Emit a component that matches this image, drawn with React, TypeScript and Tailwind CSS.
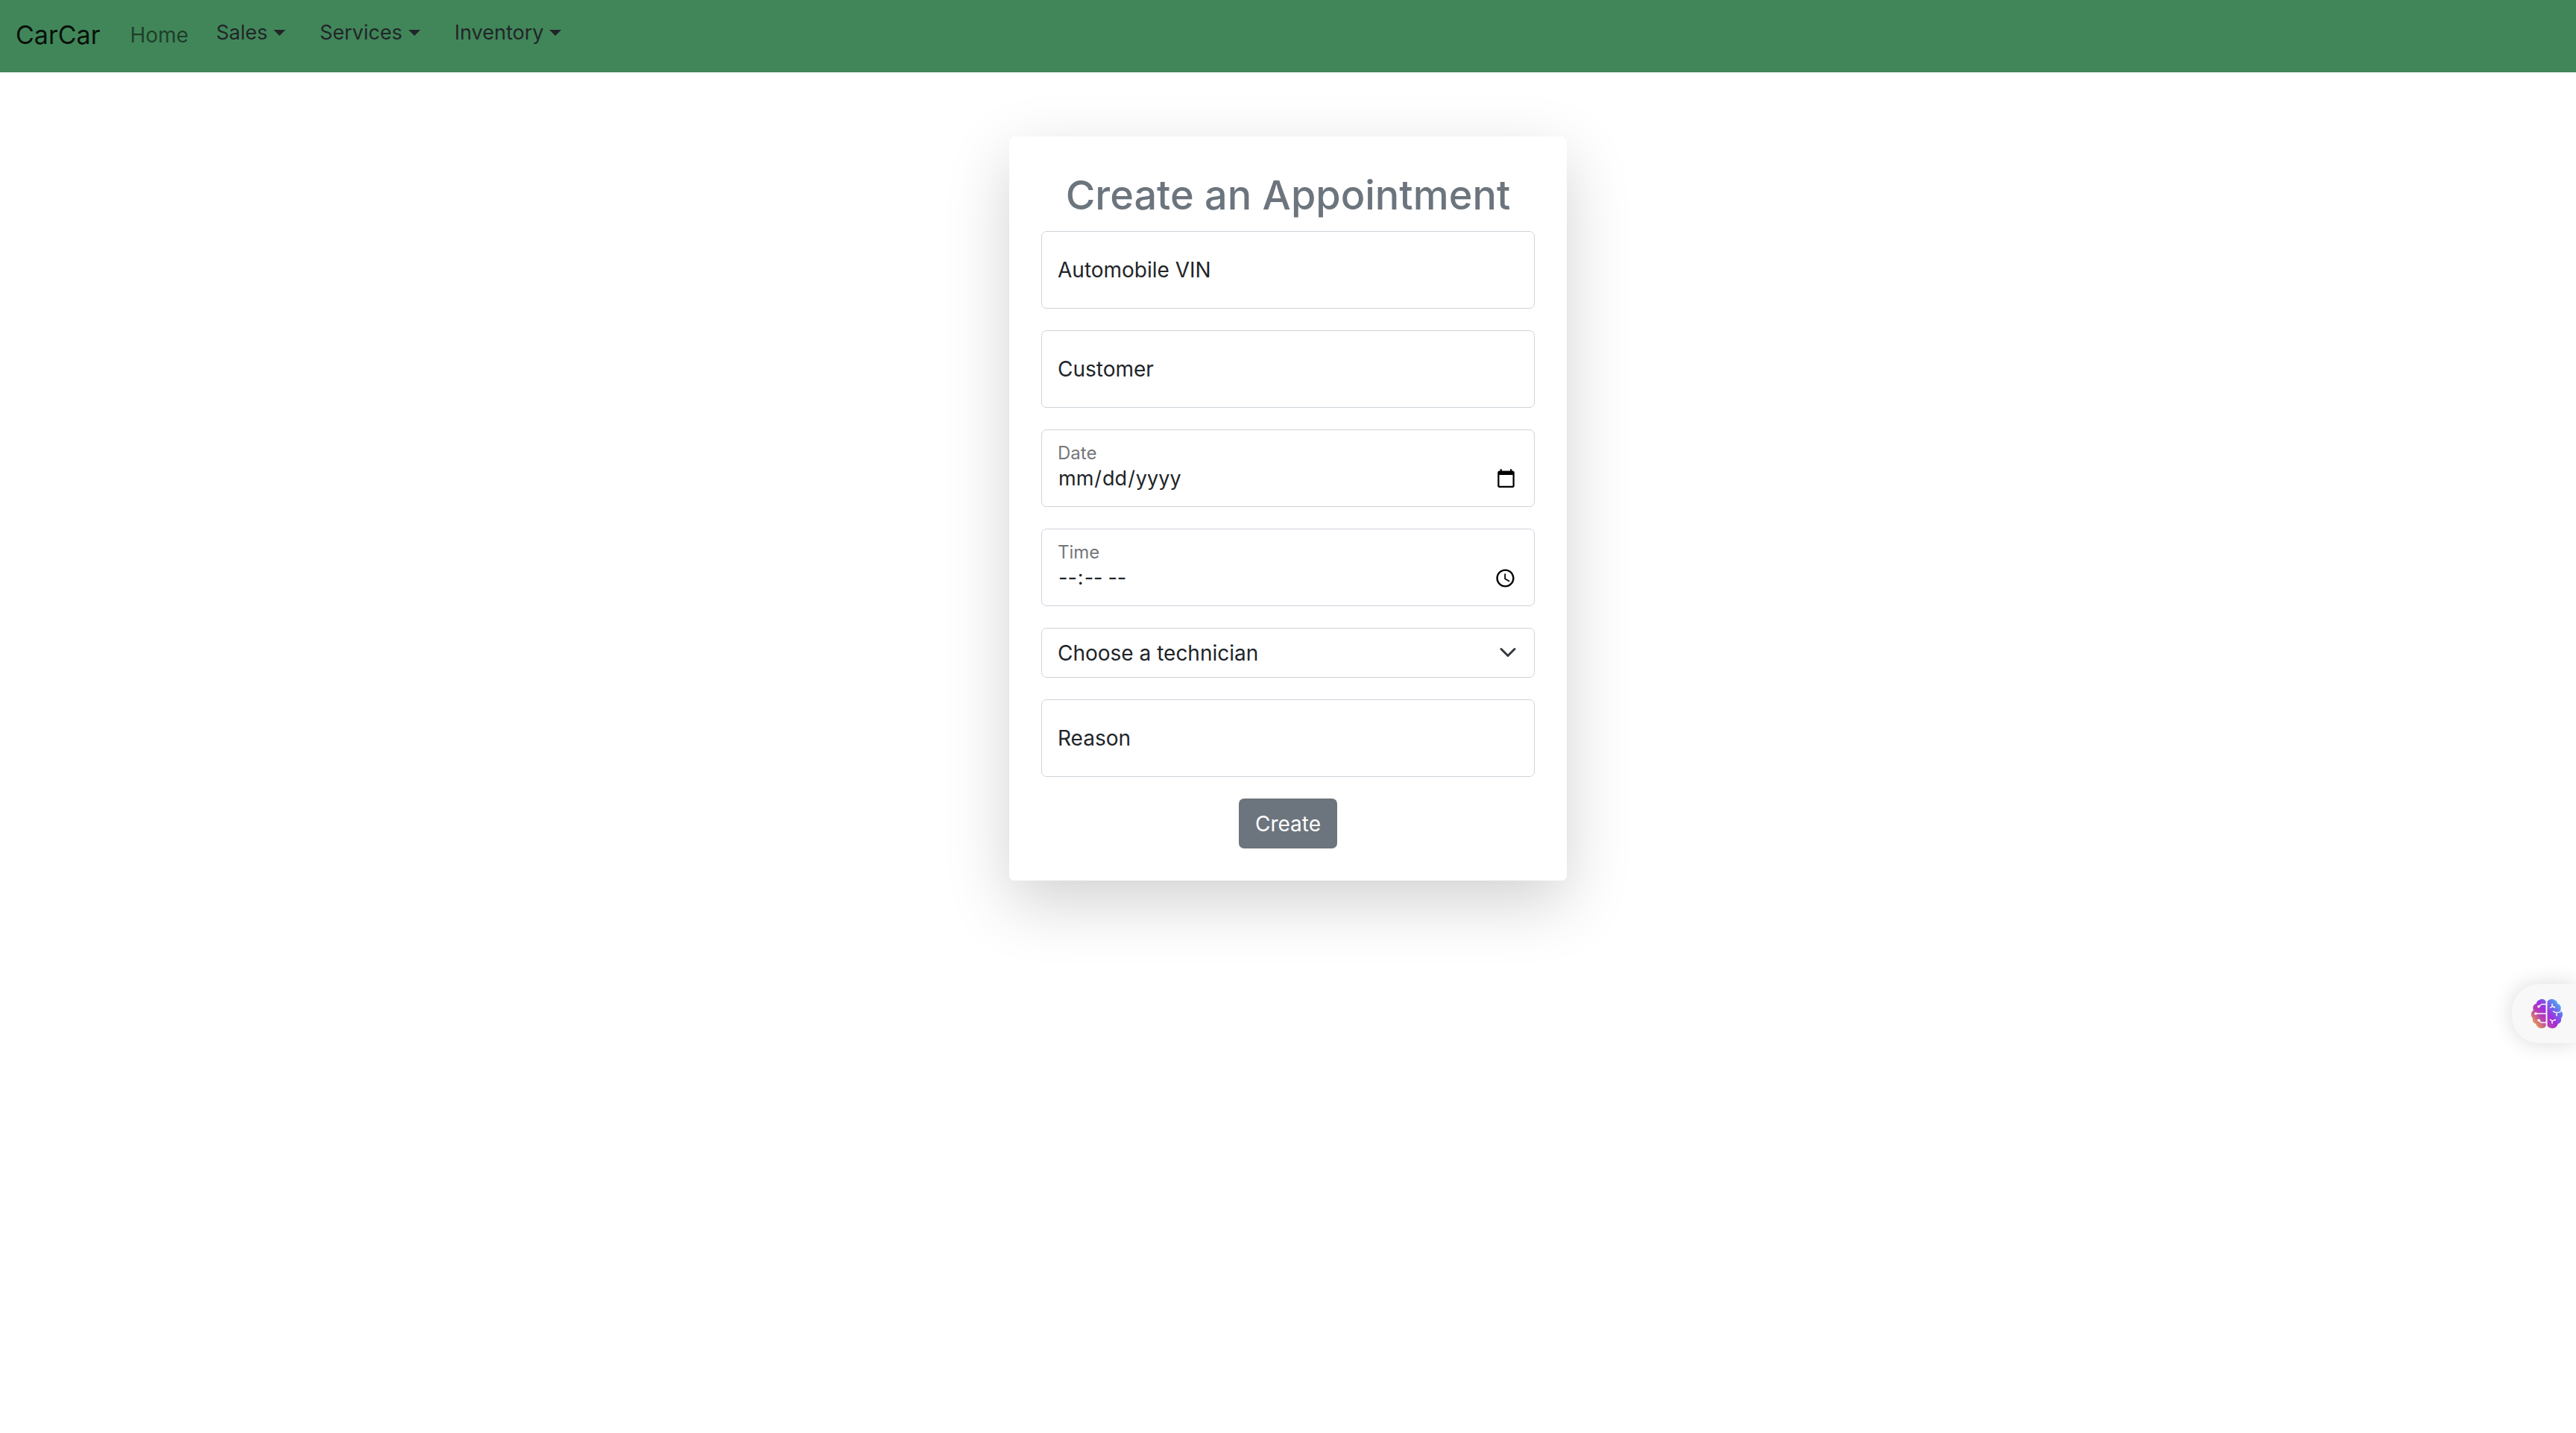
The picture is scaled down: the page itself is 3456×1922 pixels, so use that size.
import React from 'react';

const fieldBox =
  'block w-full rounded-[7px] border border-[#ced4da] bg-white px-[21px] text-[#212529] outline-none';

function TextField({ id, label }: { id: string; label: string }) {
  return (
    <div className="relative">
      <input id={id} name={id} type="text" className={`${fieldBox} h-[104px] text-[28px]`} />
      <label
        htmlFor={id}
        className="pointer-events-none absolute inset-0 flex items-center px-[22px] text-[28px] text-[#212529]"
      >
        {label}
      </label>
    </div>
  );
}

function PickerField({ id, label, type }: { id: string; label: string; type: 'date' | 'time' }) {
  return (
    <div className="relative">
      <input
        id={id}
        name={id}
        type={type}
        className={`${fieldBox} h-[104px] pt-[46px] pb-[17px] text-[27px] [&::-webkit-calendar-picker-indicator]:size-[29px]`}
      />
      <label
        htmlFor={id}
        className="pointer-events-none absolute top-4 left-[22px] text-[24px] leading-8 text-[#212529]/65"
      >
        {label}
      </label>
    </div>
  );
}

function NavMenu({ label }: { label: string }) {
  return (
    <button type="button" className="flex items-center gap-2 text-[27px] leading-[44px] text-[#212529]">
      {label}
      <svg width="16" height="8" viewBox="0 0 16 8" aria-hidden="true">
        <path d="M0 0h16L8 8z" fill="currentColor" />
      </svg>
    </button>
  );
}

function BrainIcon() {
  return (
    <svg width="44" height="42" viewBox="0 0 44 42" aria-hidden="true">
      <defs>
        <linearGradient id="brainFill" gradientUnits="userSpaceOnUse" x1="5" y1="34" x2="38" y2="6">
          <stop offset="0" stopColor="#e59a4e" />
          <stop offset="0.3" stopColor="#b93cb4" />
          <stop offset="0.52" stopColor="#a030dc" />
          <stop offset="0.75" stopColor="#7262ec" />
          <stop offset="1" stopColor="#52acf2" />
        </linearGradient>
      </defs>
      <g fill="url(#brainFill)">
        <path d="M20.500 4C19 1 15 0 12 2C9 3 8 5 8 7C4 8 2 12 4 16C0 18 0 24 3 27C2 31 5 34 7 34C9 39 12 41 16 40C18 40 20 39 20.500 37Z" />
        <path d="M22.500 4C25 1 29 0 32 2C35 3 36 5 36 7C40 8 42 12 40 16C44 18 44 24 41 27C42 31 39 34 37 34C35 39 32 41 28 40C26 40 24 39 22.500 37Z" />
      </g>
      <g fill="none" stroke="#f8f8f8" strokeWidth="1.500">
        <path d="M21 8h-6l-4 3M21 20.500H7M21 32.500h-7l-3-3" />
        <path d="M29 7v4l-3 2M29 10.500l4 2M30 17c3 3 8 3 13-1M35 19v5M26 28l3 2.500 5-2M29 30v4" />
      </g>
      <g fill="#f8f8f8">
        <circle cx="11" cy="11" r="1.800" />
        <circle cx="7" cy="20.500" r="1.800" />
        <circle cx="11" cy="29.500" r="1.800" />
      </g>
    </svg>
  );
}

export default function App() {
  return (
    <div className="min-h-screen bg-white font-['Inter',sans-serif] text-[#212529]">
      <nav className="flex h-[97px] items-start bg-[#418659] px-[21px] pt-[22px]">
        <a href="#" className="text-[34px] leading-[50px] text-black/90">
          CarCar
        </a>
        <a href="#" className="ml-10 pt-1 text-[28px] leading-[43px] text-black/55">
          Home
        </a>
        <div className="ml-[37px] flex gap-[46px]">
          <NavMenu label="Sales" />
          <NavMenu label="Services" />
          <NavMenu label="Inventory" />
        </div>
      </nav>

      <main className="flex justify-center pt-[86px]">
        <form className="flex w-[748px] flex-col gap-[29px] rounded-[7px] bg-white p-[43px] shadow-[0_29px_86px_rgba(0,0,0,0.18)]">
          <h1 className="-mb-[17px] text-center text-[54px] leading-[72px] font-medium text-[#6c757d]">
            Create an Appointment
          </h1>
          <TextField id="vin" label="Automobile VIN" />
          <TextField id="customer" label="Customer" />
          <PickerField id="date" label="Date" type="date" />
          <PickerField id="time" label="Time" type="time" />
          <div className="relative">
            <select
              id="technician"
              name="technician"
              aria-label="Technician"
              className={`${fieldBox} h-[67px] appearance-none text-[28px]`}
            >
              <option>Choose a technician</option>
            </select>
            <svg
              className="pointer-events-none absolute top-[21px] right-6"
              width="24"
              height="24"
              viewBox="0 0 16 16"
              fill="none"
              stroke="#343a40"
              strokeWidth="2"
              strokeLinecap="round"
              strokeLinejoin="round"
              aria-hidden="true"
            >
              <path d="m2 5 6 6 6-6" />
            </svg>
          </div>
          <TextField id="reason" label="Reason" />
          <button
            type="button"
            className="h-[67px] self-center rounded-[7px] bg-[#6c757d] px-[22px] text-[28px] text-white"
          >
            Create
          </button>
        </form>
      </main>

      <button
        type="button"
        aria-label="Open assistant"
        className="fixed top-[1320px] right-0 flex h-[79px] w-[86px] items-center rounded-l-[36px] bg-[#f8f8f8] pl-[25px] shadow-[0_0_28px_rgba(0,0,0,0.15)]"
      >
        <BrainIcon />
      </button>
    </div>
  );
}
